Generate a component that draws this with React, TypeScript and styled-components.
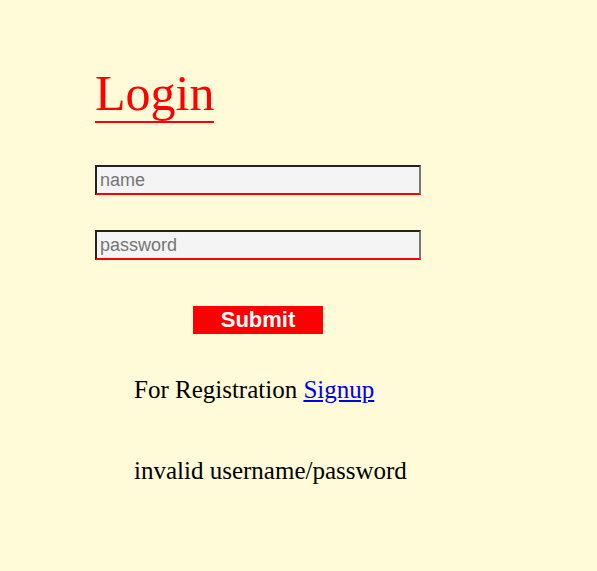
import React from "react";
import styled, { createGlobalStyle } from "styled-components";

const Global = createGlobalStyle`
  html, body { margin: 0; padding: 0; background: #fffad7; }
  body { font-family: "Liberation Serif", "Times New Roman", serif; }
`;

const Page = styled.div`
  min-height: 571px;
  background: #fffad7;
  padding: 66px 0 0 95px;
  box-sizing: border-box;
`;

const Form = styled.form`
  display: flex;
  flex-direction: column;
  align-items: flex-start;
  width: 326px;
`;

const Title = styled.h1`
  display: inline-block;
  margin: 0;
  font-family: "Liberation Serif", serif;
  font-weight: normal;
  font-size: 50px;
  line-height: 55px;
  color: #ff0000;
  border-bottom: 2px solid #ff0000;
`;

const Field = styled.input<{ $top: number }>`
  box-sizing: border-box;
  width: 326px;
  height: 30px;
  margin-top: ${(p) => p.$top}px;
  padding: 0 3px;
  background: #f4f4f4;
  border-style: solid;
  border-width: 2px;
  border-color: #222222 #777777 #ff0000 #222222;
  font-family: "Liberation Sans", Arial, sans-serif;
  font-size: 18px;
  color: #222;
  outline: none;
  &::placeholder { color: #757575; }
`;

const SubmitButton = styled.button`
  align-self: center;
  margin-top: 46px;
  width: 130px;
  height: 28px;
  padding: 0;
  border: none;
  background: #ff0000;
  color: #ffffff;
  font-family: "Liberation Sans", Arial, sans-serif;
  font-weight: bold;
  font-size: 22px;
  line-height: 28px;
  cursor: pointer;
`;

const Line = styled.p<{ $top: number }>`
  margin: ${(p) => p.$top}px 0 0 39px;
  font-family: "Liberation Serif", serif;
  font-size: 25px;
  line-height: 29px;
  color: #000;
  white-space: nowrap;
`;

const Link = styled.a`
  color: #0000ee;
  text-decoration: underline;
`;

export default function App() {
  return (
    <>
      <Global />
      <Page>
        <Form onSubmit={(e) => e.preventDefault()}>
          <Title>Login</Title>
          <Field $top={42} type="text" placeholder="name" />
          <Field $top={35} type="password" placeholder="password" />
          <SubmitButton type="submit">Submit</SubmitButton>
          <Line $top={41}>
            For Registration <Link href="#">Signup</Link>
          </Line>
          <Line $top={52}>invalid username/password</Line>
        </Form>
      </Page>
    </>
  );
}
